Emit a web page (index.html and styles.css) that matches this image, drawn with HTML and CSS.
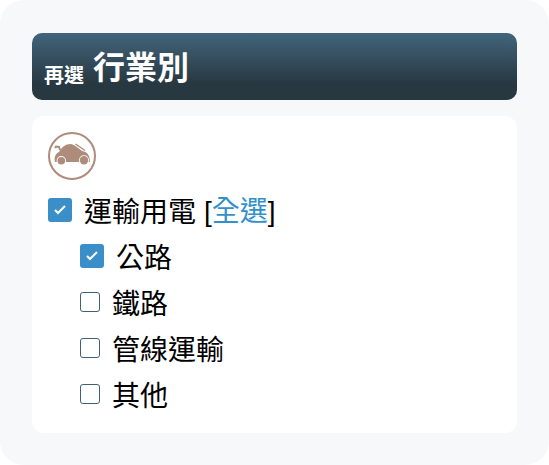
FILE: index.html
```html
<!DOCTYPE html>
<html lang="zh-Hant">
<head>
    <meta charset="UTF-8">
    <meta name="viewport" content="width=device-width, initial-scale=1.0">
    <title>行業別</title>
    <link rel="stylesheet" href="styles.css">
</head>
<body>
    <div class="panel">
        <h2 class="panel-title"><small>再選</small>行業別</h2>
        <div class="card">
            <!-- Car icon -->
            <svg class="icon" viewBox="0 0 48 48" aria-hidden="true">
                <circle cx="24" cy="24" r="23" fill="#fff" stroke="#ad8c7b" stroke-width="2"/>
                <path fill="#ad8c7b" d="M7 30C6 26 7 22 11 20C14 15 17 12 23 12C27 13 30 16 34 19C40 20 42 24 42 30Z"/>
                <path fill="none" stroke="#ad8c7b" stroke-width="2" d="M7 16L8 14.5L11 15L12 18"/>
                <path fill="none" stroke="#ad8c7b" stroke-width="1.5" d="M27.5 12L37 18.5"/>
                <circle cx="13.3" cy="28.7" r="4.7" fill="#fff"/>
                <circle cx="36" cy="28.3" r="5.1" fill="#fff"/>
                <circle cx="13.3" cy="28.7" r="3.8" fill="#ad8c7b"/>
                <circle cx="36" cy="28.3" r="4.2" fill="#ad8c7b"/>
            </svg>
            <div class="row">
                <input type="checkbox" id="transport" checked>
                <label for="transport">運輸用電</label>
                <span class="select-all">[<a href="#">全選</a>]</span>
            </div>
            <div class="row child">
                <input type="checkbox" id="road" checked>
                <label for="road">公路</label>
            </div>
            <div class="row child">
                <input type="checkbox" id="rail">
                <label for="rail">鐵路</label>
            </div>
            <div class="row child">
                <input type="checkbox" id="pipeline">
                <label for="pipeline">管線運輸</label>
            </div>
            <div class="row child">
                <input type="checkbox" id="other">
                <label for="other">其他</label>
            </div>
        </div>
    </div>
</body>
</html>
```
FILE: styles.css
```css
* {
    box-sizing: border-box;
}
body {
    margin: 0;
    background-color: #fff;
    color: #000;
    font-family: "Noto Sans CJK TC", sans-serif;
}
.panel {
    padding: 33px 32px 32px;
    border-radius: 24px;
    background-color: #f6f8fa;
}
.panel-title {
    margin: 0 0 16px;
    padding: 0 12px 3px;
    border-radius: 10px;
    background: linear-gradient(#42657c, #283841 75%);
    color: #fff;
    font-size: 32px;
    font-weight: bold;
    line-height: 64px;
}
.panel-title small {
    margin-right: 9px;
    font-size: 20px;
    line-height: 1;
    vertical-align: -4px;
}
.card {
    padding: 16px 16px 15px;
    border-radius: 12px;
    background-color: #fff;
}
.icon {
    display: block;
    width: 48px;
    height: 48px;
    margin-bottom: 7px;
}
.row {
    display: flex;
    align-items: center;
    height: 46px;
    font-size: 28px;
    line-height: 46px;
}
.row:last-child {
    margin-bottom: 1px;
}
.child {
    padding-left: 32px;
}
/* Narrow brackets around the link */
.select-all {
    margin-left: 8px;
    font-family: "Liberation Sans", sans-serif;
}
.select-all a {
    color: #3490cb;
    font-family: "Noto Sans CJK TC", sans-serif;
    text-decoration: none;
}
input {
    appearance: none;
    flex: none;
    width: 20px;
    height: 20px;
    margin: 0 12px 0 0;
    border: 1px solid #3f607b;
    border-radius: 3px;
    background-color: #fff;
}
/* Checked boxes are larger and filled */
input:checked {
    width: 24px;
    height: 24px;
    border: 0;
    background: #3a8fc8 url("data:image/svg+xml,%3Csvg xmlns='http://www.w3.org/2000/svg' viewBox='0 0 24 24'%3E%3Cpath d='M7 12l3 3 7-7' fill='none' stroke='white' stroke-width='2'/%3E%3C/svg%3E") center no-repeat;
}
```
